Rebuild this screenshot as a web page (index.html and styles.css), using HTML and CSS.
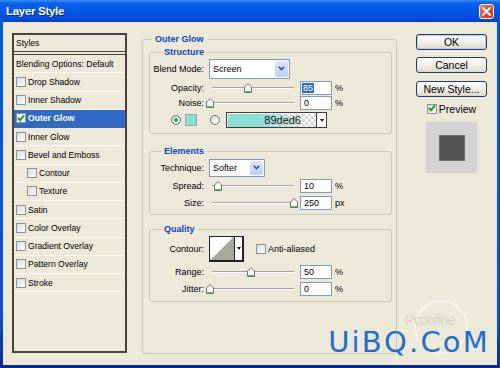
FILE: index.html
```html
<!DOCTYPE html>
<html lang="en">
<head>
  <meta charset="UTF-8">
  <title>Layer Style</title>
  <link rel="stylesheet" href="styles.css">
</head>
<body>

<div class="window">
  <div class="titlebar">
    <span class="title">Layer Style</span>
    <span class="close">
      <svg width="9" height="9" viewBox="0 0 9 9"><path d="M1 1 L8 8 M8 1 L1 8" stroke="#fff" stroke-width="1.8" stroke-linecap="round"/></svg>
    </span>
  </div>

  <div class="client">

    <div class="styles-list">
      <div class="list-head">Styles</div>
      <div class="item">Blending Options: Default</div>
      <div class="item"><span class="cb"></span>Drop Shadow</div>
      <div class="item"><span class="cb"></span>Inner Shadow</div>
      <div class="item selected"><span class="cb on"></span>Outer Glow</div>
      <div class="item"><span class="cb"></span>Inner Glow</div>
      <div class="item"><span class="cb"></span>Bevel and Emboss</div>
      <div class="item sub"><span class="cb"></span>Contour</div>
      <div class="item sub"><span class="cb"></span>Texture</div>
      <div class="item"><span class="cb"></span>Satin</div>
      <div class="item"><span class="cb"></span>Color Overlay</div>
      <div class="item"><span class="cb"></span>Gradient Overlay</div>
      <div class="item"><span class="cb"></span>Pattern Overlay</div>
      <div class="item"><span class="cb"></span>Stroke</div>
    </div>

    <fieldset class="group outer">
      <legend>Outer Glow</legend>

      <fieldset class="group structure">
        <legend>Structure</legend>
        <div class="row row-blend">
          <span class="lbl">Blend Mode:</span>
          <div class="combo combo-blend">
            <span>Screen</span>
            <span class="combo-btn"><svg width="7" height="5" viewBox="0 0 7 5"><path d="M0.8 0.8 L3.5 3.6 L6.2 0.8" fill="none" stroke="#3b4f7a" stroke-width="1.5"/></svg></span>
          </div>
        </div>
        <div class="row row-opacity">
          <span class="lbl">Opacity:</span>
          <div class="slider"><span class="track"><span class="thumb" style="left:44%"><svg width="8" height="10" viewBox="0 0 8 10"><path d="M0.5 9.5 V4 L4 0.5 L7.5 4 V9.5 Z" fill="#fff" stroke="#707070"/><path d="M1 9 H7" stroke="#2c9c3c" stroke-width="1.4"/></svg></span></span></div>
          <span class="num"><span class="sel">85</span></span><span class="unit">%</span>
        </div>
        <div class="row row-noise">
          <span class="lbl">Noise:</span>
          <div class="slider"><span class="track"><span class="thumb" style="left:-2%"><svg width="8" height="10" viewBox="0 0 8 10"><path d="M0.5 9.5 V4 L4 0.5 L7.5 4 V9.5 Z" fill="#fff" stroke="#707070"/><path d="M1 9 H7" stroke="#2c9c3c" stroke-width="1.4"/></svg></span></span></div>
          <span class="num">0</span><span class="unit">%</span>
        </div>
        <div class="row row-color">
          <span class="radio on"></span>
          <span class="swatch"></span>
          <span class="radio radio-grad"></span>
          <div class="gradient">
            <span class="grad-fill">89ded6</span>
            <span class="grad-arrow"></span>
          </div>
        </div>
      </fieldset>

      <fieldset class="group elements">
        <legend>Elements</legend>
        <div class="row row-technique">
          <span class="lbl">Technique:</span>
          <div class="combo combo-technique">
            <span>Softer</span>
            <span class="combo-btn"><svg width="7" height="5" viewBox="0 0 7 5"><path d="M0.8 0.8 L3.5 3.6 L6.2 0.8" fill="none" stroke="#3b4f7a" stroke-width="1.5"/></svg></span>
          </div>
        </div>
        <div class="row row-spread">
          <span class="lbl">Spread:</span>
          <div class="slider"><span class="track"><span class="thumb" style="left:7%"><svg width="8" height="10" viewBox="0 0 8 10"><path d="M0.5 9.5 V4 L4 0.5 L7.5 4 V9.5 Z" fill="#fff" stroke="#707070"/><path d="M1 9 H7" stroke="#2c9c3c" stroke-width="1.4"/></svg></span></span></div>
          <span class="num">10</span><span class="unit">%</span>
        </div>
        <div class="row row-size">
          <span class="lbl">Size:</span>
          <div class="slider"><span class="track"><span class="thumb" style="left:100%"><svg width="8" height="10" viewBox="0 0 8 10"><path d="M0.5 9.5 V4 L4 0.5 L7.5 4 V9.5 Z" fill="#fff" stroke="#707070"/><path d="M1 9 H7" stroke="#2c9c3c" stroke-width="1.4"/></svg></span></span></div>
          <span class="num">250</span><span class="unit">px</span>
        </div>
      </fieldset>

      <fieldset class="group quality">
        <legend>Quality</legend>
        <div class="row row-contour">
          <span class="lbl">Contour:</span>
          <div class="contour">
            <span class="contour-graph"></span>
            <span class="contour-arrow"></span>
          </div>
          <span class="cb cb-aa"></span><span class="aa-text">Anti-aliased</span>
        </div>
        <div class="row row-range">
          <span class="lbl">Range:</span>
          <div class="slider"><span class="track"><span class="thumb" style="left:48%"><svg width="8" height="10" viewBox="0 0 8 10"><path d="M0.5 9.5 V4 L4 0.5 L7.5 4 V9.5 Z" fill="#fff" stroke="#707070"/><path d="M1 9 H7" stroke="#2c9c3c" stroke-width="1.4"/></svg></span></span></div>
          <span class="num">50</span><span class="unit">%</span>
        </div>
        <div class="row row-jitter">
          <span class="lbl">Jitter:</span>
          <div class="slider"><span class="track"><span class="thumb" style="left:-2%"><svg width="8" height="10" viewBox="0 0 8 10"><path d="M0.5 9.5 V4 L4 0.5 L7.5 4 V9.5 Z" fill="#fff" stroke="#707070"/><path d="M1 9 H7" stroke="#2c9c3c" stroke-width="1.4"/></svg></span></span></div>
          <span class="num">0</span><span class="unit">%</span>
        </div>
      </fieldset>
    </fieldset>

    <div class="actions">
      <button class="btn btn-default">OK</button>
      <button class="btn btn-cancel">Cancel</button>
      <button class="btn btn-new">New Style...</button>
      <div class="preview-check"><span class="cb on"></span>Preview</div>
      <div class="preview"><div class="preview-swatch"></div></div>
    </div>

  </div>

  <!-- site watermarks on top of the screenshot -->
  <div class="pc-logo"><span>Pconline</span></div>
  <div class="watermark">UiBQ.CoM</div>
</div>

</body>
</html>
```

FILE: styles.css
```css
body, html {
  margin: 0;
  overflow: hidden;
}

body {
  font-family: "Liberation Sans", Arial, sans-serif;
  font-size: 9px;
  color: #000;
}

.window {
  position: relative;
  width: 500px;
  height: 368px;
  display: flex;
  flex-direction: column;
  background: linear-gradient(#0058ee, #0a50dc 85%, #0a2c96);
}

/* title bar */
.titlebar {
  height: 22px;
  flex: none;
  display: flex;
  align-items: center;
  justify-content: space-between;
  padding: 0 6px 0 6px;
  background: linear-gradient(#3d8ff9 0, #0b62ef 3px, #0058e8 50%, #004cdc 85%, #0040c8);
}

.title {
  color: #fff;
  font-weight: bold;
  font-size: 11.5px;
  letter-spacing: -0.3px;
  text-shadow: 1px 1px 0 #0a2a8a;
}

.close {
  width: 13px;
  height: 13px;
  border: 1px solid #fff;
  border-radius: 3px;
  background: linear-gradient(135deg, #ee7c5c, #d84a26 60%, #c23b17);
  display: flex;
  align-items: center;
  justify-content: center;
}

/* client area */
.client {
  flex: 1;
  margin: 0 3px 3px;
  background: #ece9d8;
  display: flex;
  align-items: flex-start;
  padding: 11px 0 0 9px;
}

/* styles list */
.styles-list {
  width: 115px;
  height: 320px;
  box-sizing: border-box;
  border: 2px solid #45433c;
  font-size: 8.6px;
}

.list-head {
  height: 20px;
  box-sizing: border-box;
  border-bottom: 4px double #45433c;
  padding-left: 2px;
  display: flex;
  align-items: center;
}

.item {
  height: 18.25px;
  box-sizing: border-box;
  border-bottom: 1px solid #f9f8f2;
  padding-left: 2px;
  display: flex;
  align-items: center;
}

.item.sub {
  padding-left: 13px;
}

.item.selected {
  background: #316ac5;
  color: #fff;
  font-weight: bold;
  border-bottom-color: #316ac5;
}

.cb {
  width: 10px;
  height: 10px;
  flex: none;
  box-sizing: border-box;
  border: 1px solid #8494a6;
  background: linear-gradient(135deg, #dcdcd4, #fff);
  margin-right: 2px;
  display: flex;
  align-items: center;
  justify-content: center;
}

.cb.on::after {
  content: "";
  width: 2px;
  height: 5px;
  margin-top: -2px;
  border: solid #21a121;
  border-width: 0 2px 2px 0;
  transform: rotate(40deg);
}

.item.selected .cb {
  background: #fff;
}

/* group boxes */
fieldset.group {
  margin: 0;
  padding: 0;
  min-width: 0;
  border: 1px solid #cac8b8;
  border-radius: 3px;
  box-sizing: border-box;
}

fieldset.group > legend {
  font-weight: bold;
  color: #0a46c8;
  font-size: 9px;
  line-height: 12px;
  padding: 0 3px;
  margin-left: 11px;
}

fieldset.outer {
  width: 255px;
  height: 321px;
  margin: 0 0 0 15px;
  padding: 0 4px 0 6px;
}

fieldset.outer > legend {
  margin-left: 3px;
}

fieldset.structure {
  margin-top: 1px;
  padding-bottom: 3px;
}

fieldset.elements {
  margin-top: 11px;
  padding-bottom: 3px;
}

fieldset.quality {
  margin-top: 8px;
  padding-bottom: 4px;
}

.row {
  display: flex;
  align-items: center;
}

.row-blend { height: 21px; }
.row-opacity { height: 17px; }
.row-noise { height: 14px; }
.row-color { height: 20px; }
.row-technique { height: 21px; }
.row-spread { height: 16px; }
.row-size { height: 17px; }
.row-contour { height: 28px; }
.row-range { height: 17px; }
.row-jitter { height: 17px; }

.lbl {
  width: 54px;
  flex: none;
  text-align: right;
}

/* combo boxes */
.combo {
  margin-left: 5px;
  box-sizing: border-box;
  border: 1px solid #7f9db9;
  background: #fff;
  display: flex;
  align-items: center;
  justify-content: space-between;
  padding-left: 3px;
}

.combo-blend {
  width: 81px;
  height: 20px;
}

.combo-technique {
  width: 56px;
  height: 18px;
}

.combo-btn {
  width: 13px;
  align-self: stretch;
  margin: 1px;
  border-radius: 2px;
  background: linear-gradient(#dfe8fd, #b9cff9);
  display: flex;
  align-items: center;
  justify-content: center;
}

/* sliders */
.slider {
  width: 88px;
  flex: none;
  margin-left: 5px;
  display: flex;
  align-items: center;
}

.track {
  position: relative;
  flex: 1;
  height: 0;
  margin: 0 3px;
  border-top: 1px solid #a8a69b;
  border-bottom: 1px solid #fff;
}

.thumb {
  position: absolute;
  top: -5px;
  width: 8px;
  height: 10px;
  transform: translateX(-50%);
}

.thumb svg {
  display: block;
}

.num {
  width: 32px;
  height: 14px;
  flex: none;
  box-sizing: border-box;
  margin-left: 3px;
  border: 1px solid #7f9db9;
  background: #fff;
  padding-left: 3px;
  display: flex;
  align-items: center;
}

.sel {
  background: #316ac5;
  color: #fff;
  margin-left: -2px;
  padding: 0 1px;
}

.unit {
  margin-left: 3px;
}

/* colour row */
.radio {
  width: 10px;
  height: 10px;
  flex: none;
  box-sizing: border-box;
  border: 1px solid #5f7590;
  border-radius: 50%;
  background: linear-gradient(135deg, #dcdcd4, #fff);
  display: flex;
  align-items: center;
  justify-content: center;
  margin-left: 21px;
}

.radio.on::after {
  content: "";
  width: 4px;
  height: 4px;
  border-radius: 50%;
  background: #2fa62f;
}

.radio-grad {
  margin-left: 13px;
}

.swatch {
  width: 12px;
  height: 12px;
  flex: none;
  box-sizing: border-box;
  margin-left: 4px;
  border: 1px solid #9aa6a4;
  background: #89ded6;
}

.gradient {
  width: 101px;
  height: 16px;
  margin-left: 6px;
  box-sizing: border-box;
  border: 1px solid #3c3c3c;
  display: flex;
}

.grad-fill {
  flex: 1;
  display: flex;
  align-items: center;
  justify-content: flex-end;
  padding-right: 15px;
  font-size: 11px;
  color: #111;
  background:
    linear-gradient(to right, #89ded6 38%, rgba(137, 222, 214, 0) 88%),
    repeating-conic-gradient(#d6d6d6 0 25%, #fff 0 50%) 0 0 / 6px 6px;
  box-shadow: inset 1px 1px 0 #fff;
}

.grad-arrow {
  width: 9px;
  border-left: 1px solid #3c3c3c;
  background: #fff;
  display: flex;
  align-items: center;
  justify-content: center;
}

.grad-arrow::after,
.contour-arrow::after {
  content: "";
  border-style: solid;
  border-width: 3px 2.5px 0;
  border-color: #111 transparent transparent;
}

/* contour */
.contour {
  width: 35px;
  height: 26px;
  margin-left: 5px;
  box-sizing: border-box;
  border: 1px solid #222;
  border-right-width: 2px;
  border-bottom-width: 2px;
  display: flex;
}

.contour-graph {
  flex: 1;
  background: linear-gradient(to bottom right, #fff 50%, #aaa79b 50%);
}

.contour-arrow {
  width: 7px;
  border-left: 1px solid #222;
  background: #fff;
  display: flex;
  align-items: center;
  justify-content: center;
}

.cb-aa {
  margin-left: 12px;
}

/* right column */
.actions {
  width: 71px;
  margin-left: 19px;
  display: flex;
  flex-direction: column;
}

.btn {
  height: 16px;
  padding: 0;
  font-family: "Liberation Sans", Arial, sans-serif;
  font-size: 10.5px;
  color: #000;
  border: 1px solid #1f3f62;
  border-radius: 3px;
  background: linear-gradient(#fff, #f3f2ec 40%, #e2dfd3 90%, #d4d0c4);
}

.btn-default {
  margin-top: 1px;
  box-shadow: inset 0 0 0 1px #b7cdf3;
}

.btn-cancel {
  margin-top: 7px;
}

.btn-new {
  margin-top: 8px;
}

.preview-check {
  margin-top: 6px;
  height: 11px;
  display: flex;
  align-items: center;
  justify-content: center;
  font-size: 10.5px;
}

.preview {
  width: 53px;
  height: 53px;
  margin: 7px auto 0;
  box-sizing: border-box;
  border: 1px solid #e6e4dc;
  background: #d3d3d3;
  display: flex;
  align-items: center;
  justify-content: center;
}

.preview-swatch {
  width: 26px;
  height: 26px;
  box-sizing: border-box;
  border: 1px solid #6e6e6e;
  background: #545454;
}

/* watermarks laid over the dialog */
.pc-logo {
  position: absolute;
  left: 414px;
  top: 300px;
  width: 50px;
  height: 50px;
  border-radius: 50%;
  border: 2px solid rgba(255, 255, 255, 0.45);
  display: flex;
  align-items: flex-start;
  justify-content: center;
}

.pc-logo span {
  margin: 11px 0 0 -22px;
  font-size: 14px;
  line-height: 14px;
  color: rgba(190, 190, 180, 0.55);
  letter-spacing: -0.5px;
}

.watermark {
  position: absolute;
  top: 328px;
  right: 10px;
  font-family: "DejaVu Sans", sans-serif;
  font-size: 29px;
  line-height: 29px;
  letter-spacing: 2.2px;
  color: #1d6fd0;
}
```
